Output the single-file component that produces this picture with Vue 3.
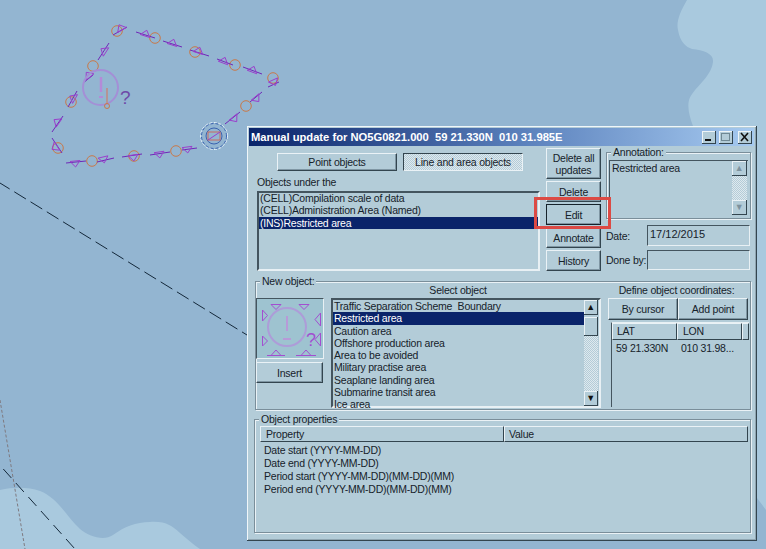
<script setup>
const titleText = 'Manual update for NO5G0821.000  59 21.330N  010 31.985E'
const segments = [
  [109, 43, 98, 60, 106, 52], [93, 75, 83, 83, 90, 77], [77, 91, 68, 107, 75, 99],
  [63, 116, 52, 132, 59, 123], [52, 138, 62, 153, 57, 146], [66, 163, 86, 161, 75, 161],
  [97, 162, 114, 158, 103, 157], [122, 157, 142, 154, 133, 155], [150, 155, 170, 152, 159, 152],
  [182, 150, 197, 148, 187, 147], [225, 124, 240, 112, 233, 117], [250, 102, 262, 92, 255, 97],
  [268, 87, 279, 82, 273, 80], [262, 74, 243, 67, 252, 72], [233, 65, 217, 59, 223, 63],
  [209, 56, 190, 50, 198, 53], [182, 47, 163, 41, 172, 45], [155, 38, 136, 32, 145, 36],
  [127, 27, 113, 35, 122, 30]
]
const trianglePoints = (s) => {
  const [x1, y1, x2, y2, cx, cy] = s
  const dx = x2 - x1
  const dy = y2 - y1
  const len = Math.hypot(dx, dy)
  const ux = dx / len
  const uy = dy / len
  return `${cx - ux * 5},${cy - uy * 5} ${cx + ux * 5},${cy + uy * 5} ${cx - uy * 6},${cy + ux * 6}`
}
const circles = [
  [117, 31], [155, 38], [195, 52], [235, 65], [273, 78], [246, 106], [176, 151],
  [134, 156], [92, 161], [58, 148], [71, 102], [93, 66]
]
const dashLines = [
  { d: 'M-2 181.8 L247 335', dash: '13.7 5.4' },
  { d: 'M3.3 469 L75 549', dash: '12 6.8' }
]
const existing = ['(CELL)Compilation scale of data', '(CELL)Administration Area (Named)', '(INS)Restricted area']
const objects = [
  'Traffic Separation Scheme  Boundary', 'Restricted area', 'Caution area', 'Offshore production area',
  'Area to be avoided', 'Military practise area', 'Seaplane landing area', 'Submarine transit area', 'Ice area'
]
const properties = [
  'Date start (YYYY-MM-DD)', 'Date end (YYYY-MM-DD)',
  'Period start (YYYY-MM-DD)(MM-DD)(MM)', 'Period end (YYYY-MM-DD)(MM-DD)(MM)'
]
</script>

<template>
  <div class="desktop">
    <svg class="chart" width="766" height="549" viewBox="0 0 766 549">
      <path d="M687 0 C680 12 676 22 678 30 C680 42 686 47 692 49 C704 50 714 54 713 62 C711 78 693 88 689 100 C687 108 690 118 693 126 L757 126 L757 498 L766 510 L766 0 Z" fill="#a9c9de" />
      <path d="M0 490 C14 487 28 487 40 491 C58 498 66 516 80 529 C90 537 104 541 113 535 C124 527 136 522 150 522 C166 521 172 526 180 533 C187 539 194 545 200 549 L0 549 Z" fill="#a9c9de" />
      <path v-for="l in dashLines" :key="l.d" :d="l.d" fill="none" stroke="#14283a" :stroke-dasharray="l.dash" />
      <path d="M0 400 L25 549" fill="none" stroke="#7f7a80" stroke-dasharray="3 2" />

      <g fill="none">
        <circle v-for="c in circles" :key="c[0]" :cx="c[0]" :cy="c[1]" r="5.3" stroke="#c8794a" />
        <g v-for="s in segments" :key="s[0] + '-' + s[1]">
          <line :x1="s[0]" :y1="s[1]" :x2="s[2]" :y2="s[3]" stroke="#6f28b8" />
          <polygon :points="trianglePoints(s)" stroke="#9a3fcc" />
        </g>
        <circle cx="100.5" cy="87.5" r="17.5" stroke="#a48fd6" stroke-width="2" />
        <line x1="101" y1="77" x2="101" y2="92" stroke="#b48ad8" stroke-width="2.5" />
        <line x1="99" y1="97" x2="103" y2="97" stroke="#b48ad8" stroke-width="2" />
        <line x1="107" y1="88" x2="107" y2="104" stroke="#c08a80" stroke-width="1.5" />
        <circle cx="107" cy="106" r="2.5" stroke="#c8794a" />
        <circle cx="214" cy="136" r="13.5" stroke="#e8f2fa" stroke-dasharray="3 1.5" />
        <circle cx="214" cy="136" r="12.5" stroke="#3a62b0" stroke-dasharray="3 2" />
        <circle cx="214" cy="136" r="8" stroke="#3a62b0" />
        <rect x="208" y="132" width="12" height="8" stroke="#c86a60" />
        <line x1="208" y1="140" x2="220" y2="132" stroke="#9a3fcc" />
      </g>
      <text class="mark" x="120" y="104">?</text>
    </svg>

    <div class="window">
      <div class="title">
        <span class="title-text">{{ titleText }}</span>
        <span class="title-buttons">
          <span class="tb"><svg width="11" height="10"><rect x="2" y="7" width="6" height="2" fill="#111" /></svg></span>
          <span class="tb"><svg width="11" height="10"><rect x="1.5" y="1.5" width="8" height="7" fill="none" stroke="#6f8894" /></svg></span>
          <span class="tb tb-close"><svg width="11" height="10"><path d="M2 1 L9 9 M9 1 L2 9" stroke="#111" stroke-width="1.6" /></svg></span>
        </span>
      </div>

      <div class="top">
        <div class="objects">
          <div class="tabs">
            <button class="btn tab">Point objects</button>
            <button class="btn tab pressed">Line and area objects</button>
          </div>
          <div class="under-label">Objects under the</div>
          <div class="list under-list">
            <div v-for="(row, i) in existing" :key="row" class="row" :class="{ sel: i === 2 }">{{ row }}</div>
          </div>
        </div>

        <div class="actions">
          <button class="btn act tall">Delete all<br>updates</button>
          <button class="btn act">Delete</button>
          <button class="btn act focused">Edit</button>
          <button class="btn act">Annotate</button>
          <button class="btn act">History</button>
        </div>

        <div class="meta">
          <div class="group annotation">
            <span class="legend">Annotation:</span>
            <div class="note">
              <span class="note-text">Restricted area</span>
              <div class="scroll note-scroll">
                <span class="arrow muted">▲</span>
                <span class="track"></span>
                <span class="arrow muted">▼</span>
              </div>
            </div>
          </div>
          <div class="field date-field">
            <label>Date:</label>
            <span class="input">17/12/2015</span>
          </div>
          <div class="field done-field">
            <label>Done by:</label>
            <span class="input"></span>
          </div>
        </div>
      </div>

      <div class="group new-object">
        <span class="legend">New object:</span>
        <div class="preview-col">
          <div class="preview">
            <svg width="66" height="59" viewBox="0 0 66 59" fill="none" stroke="#a24fd0">
              <circle cx="30" cy="28" r="19" stroke="#ad9cd8" stroke-width="2" />
              <line x1="30" y1="17" x2="30" y2="32" stroke="#b79ad8" stroke-width="2" />
              <line x1="26" y1="40" x2="34" y2="40" stroke="#b79ad8" stroke-width="2" />
              <path d="M14 5.5 H24 L19 10.5 Z M42 5.5 H52 L47 10.5 Z M5.5 11 V22 L10.5 16.5 Z M5.5 37 V47 L10.5 42 Z M63.5 14 V27 L58 20.5 Z M63.5 34 V47 L58 40.5 Z M10 56.5 H28 M19 51 L24 56.5 H14 Z M39 56.5 H59 M49 51 L54 56.5 H44 Z" />
              <text class="mark preview-mark" x="49" y="47">?</text>
            </svg>
          </div>
          <button class="btn insert">Insert</button>
        </div>

        <div class="select-col">
          <div class="caption select-caption">Select object</div>
          <div class="list object-list">
            <div class="rows">
              <div v-for="(row, i) in objects" :key="row" class="row" :class="{ sel: i === 1 }">{{ row }}</div>
            </div>
            <div class="scroll list-scroll">
              <span class="arrow">▲</span>
              <span class="thumb"></span>
              <span class="track"></span>
              <span class="arrow">▼</span>
            </div>
          </div>
        </div>

        <div class="coords-col">
          <div class="caption coords-caption">Define object coordinates:</div>
          <div class="coord-buttons">
            <button class="btn coord">By cursor</button>
            <button class="btn coord">Add point</button>
          </div>
          <div class="coord-table">
            <div class="coord-head">
              <span class="head-cell lat">LAT</span>
              <span class="head-cell lon">LON</span>
              <span class="head-cell"></span>
            </div>
            <div class="coord-row">
              <span class="lat">59 21.330N</span>
              <span class="lon">010 31.98...</span>
            </div>
          </div>
        </div>
      </div>

      <div class="group props">
        <span class="legend">Object properties</span>
        <div class="props-head">
          <span class="head-cell prop-name">Property</span>
          <span class="head-cell prop-value">Value</span>
        </div>
        <div v-for="p in properties" :key="p" class="prop-row">{{ p }}</div>
      </div>

      <div class="highlight"></div>
    </div>
  </div>
</template>

<style scoped>
.desktop {
  position: relative;
  width: 766px;
  height: 549px;
  overflow: hidden;
  background: #93b5d1;
  font-family: "Liberation Sans", Arial, sans-serif;
  font-size: 10.5px;
  letter-spacing: -0.22px;
  color: #16222a;
}

.chart {
  position: absolute;
  left: 0;
  top: 0;
}

.mark {
  font-family: "Liberation Sans", Arial, sans-serif;
  font-size: 19px;
  fill: #6e4aa8;
  stroke: none;
}

.preview-mark {
  font-size: 18px;
  fill: #a24fd0;
}

.window {
  position: absolute;
  left: 247px;
  top: 126px;
  width: 510px;
  height: 415px;
  box-sizing: border-box;
  padding: 2px;
  background: #b3ccd8;
  border-right: 1px solid #33454f;
  border-bottom: 1px solid #33454f;
  box-shadow: inset 1px 1px 0 #f0f6f9, inset -1px -1px 0 #8fa5b1;
}

.title {
  display: flex;
  align-items: center;
  justify-content: space-between;
  height: 18px;
  padding: 0 2px;
  background: linear-gradient(90deg, #0a246a, #5c82bd 55%, #a6caf0);
}

.title-text {
  color: #fff;
  font-weight: bold;
  font-size: 11.2px;
  letter-spacing: 0;
  white-space: pre;
}

.title-buttons {
  display: flex;
  gap: 3px;
}

.tb {
  display: flex;
  align-items: center;
  justify-content: center;
  width: 13px;
  height: 12px;
  background: #b3ccd8;
  border-right: 1px solid #33454f;
  border-bottom: 1px solid #33454f;
  box-shadow: inset 1px 1px 0 #eef4f7;
}

.tb-close {
  margin-left: 2px;
}

.btn {
  box-sizing: border-box;
  padding: 0;
  font: inherit;
  letter-spacing: inherit;
  color: inherit;
  background: #b3ccd8;
  border: 1px solid;
  border-color: #eaf2f6 #33454f #33454f #eaf2f6;
  box-shadow: inset -1px -1px 0 #7f96a3;
}

.top {
  display: flex;
  margin: 2px 0 0 8px;
  height: 125px;
}

.objects {
  width: 283px;
}

.tabs {
  display: flex;
  gap: 6px;
  margin: 5px 0 0 20px;
}

.tab {
  width: 120px;
  height: 18px;
}

.pressed {
  border-color: #33454f #eaf2f6 #eaf2f6 #33454f;
  box-shadow: none;
  background: repeating-conic-gradient(#dfe9ee 0 25%, #b3ccd8 0 50%) 0 0 / 2px 2px;
}

.under-label {
  margin-top: 4px;
  height: 16px;
  line-height: 14px;
}

.list {
  box-sizing: border-box;
  border: 2px solid;
  border-color: #44555f #e8f0f4 #e8f0f4 #44555f;
}

.under-list {
  height: 80px;
}

.under-list .row:first-child {
  margin-top: -1px;
}

.row {
  height: 12.4px;
  line-height: 12.4px;
  padding-left: 1px;
  white-space: pre;
}

.sel {
  background: #0a246a;
  color: #fff;
}

.actions {
  display: flex;
  flex-direction: column;
  gap: 2px;
  width: 55px;
  margin-left: 6px;
}

.act {
  height: 21px;
  line-height: 12px;
}

.tall {
  height: 31px;
}

.focused {
  outline: 1px solid #16222a;
  outline-offset: -1px;
}

.meta {
  width: 145px;
  margin-left: 5px;
}

.group {
  position: relative;
  box-sizing: border-box;
  border: 1px solid #7a8e9a;
  box-shadow: 1px 1px 0 #eaf2f6, inset 1px 1px 0 #eaf2f6;
}

.legend {
  position: absolute;
  left: 4px;
  top: -7px;
  padding: 0 2px;
  line-height: 12px;
  background: #b3ccd8;
}

.annotation {
  box-sizing: border-box;
  height: 67px;
  margin-top: 4px;
  padding: 7px 2px 2px;
}

.note {
  display: flex;
  justify-content: space-between;
  height: 55px;
  box-sizing: border-box;
  border-left: 1px solid #44555f;
  border-top: 1px solid #44555f;
}

.note-text {
  padding: 1px 0 0 2px;
}

.scroll {
  display: flex;
  flex-direction: column;
}

.note-scroll {
  width: 15px;
  margin-right: 1px;
}

.arrow {
  display: flex;
  align-items: center;
  justify-content: center;
  flex: none;
  height: 14px;
  font-size: 9px;
  color: #111;
  background: #b3ccd8;
  border-right: 1px solid #33454f;
  border-bottom: 1px solid #33454f;
  box-shadow: inset 1px 1px 0 #eaf2f6;
}

.muted {
  color: #7d929e;
}

.track {
  flex: 1;
  background: repeating-conic-gradient(#dfe9ee 0 25%, #b3ccd8 0 50%) 0 0 / 2px 2px;
}

.field {
  display: flex;
  align-items: center;
  justify-content: space-between;
}

.field label {
  white-space: nowrap;
}

.date-field {
  margin-top: 6px;
}

.done-field {
  margin-top: 4px;
}

.input {
  box-sizing: border-box;
  flex: none;
  width: 103px;
  height: 20px;
  margin-right: 1px;
  padding: 1px 0 0 2px;
  border: 1px solid;
  border-color: #44555f #e8f0f4 #e8f0f4 #44555f;
  font-size: 11px;
  letter-spacing: 0;
  line-height: 14px;
}

.date-field .input {
  height: 21px;
}

.new-object {
  display: flex;
  width: 496px;
  height: 129px;
  margin: 8px 0 0 6px;
  padding: 2px 0 0 0;
}

.preview-col {
  width: 68px;
  margin: 14px 0 0 0;
}

.preview {
  box-sizing: border-box;
  height: 61px;
  background: #9ec3d0;
  border: 1px solid;
  border-color: #44555f #e8f0f4 #e8f0f4 #44555f;
}

.preview svg {
  display: block;
}

.insert {
  width: 67px;
  height: 21px;
  margin-top: 3px;
}

.select-col {
  width: 270px;
  margin-left: 7px;
}

.caption {
  height: 12px;
  line-height: 12px;
  text-align: center;
  margin-bottom: 2px;
}

.select-caption {
  padding-right: 16px;
}

.coords-caption {
  padding-right: 4px;
}

.object-list {
  display: flex;
  height: 110px;
}

.rows {
  flex: 1;
}

.object-list .row {
  height: 12.25px;
  line-height: 12.25px;
}

.list-scroll {
  width: 14px;
  margin-right: 1px;
}

.thumb {
  flex: none;
  height: 18px;
  margin-top: 2px;
  background: #b3ccd8;
  border-right: 1px solid #33454f;
  border-bottom: 1px solid #33454f;
  box-shadow: inset 1px 1px 0 #eaf2f6;
}

.coords-col {
  width: 141px;
  margin-left: 7px;
}

.coord-buttons {
  display: flex;
  margin-top: 1px;
}

.coord {
  width: 70px;
  height: 22px;
}

.coord-table {
  box-sizing: border-box;
  height: 85px;
  margin: 2px 0 0 3px;
  border-left: 1px solid #44555f;
  border-top: 1px solid #e8f0f4;
}

.coord-head {
  display: flex;
  height: 17px;
}

.head-cell {
  box-sizing: border-box;
  padding-left: 5px;
  line-height: 15px;
  border: 1px solid;
  border-color: #eaf2f6 #33454f #33454f #eaf2f6;
}

.lat {
  width: 65px;
}

.lon {
  width: 65px;
}

.coord-head .lat {
  padding-left: 4px;
}

.coord-head .head-cell:last-child {
  flex: 1;
  padding: 0;
}

.coord-row {
  display: flex;
  margin-top: 2px;
  line-height: 13px;
  white-space: nowrap;
}

.coord-row span {
  padding-left: 4px;
  box-sizing: border-box;
}

.props {
  width: 497px;
  height: 114px;
  margin: 9px 0 0 5px;
  padding: 6px 2px 0 5px;
}

.props-head {
  display: flex;
  height: 16px;
}

.prop-name {
  width: 244px;
}

.prop-value {
  flex: 1;
  padding-left: 4px;
}

.props-head + .prop-row {
  margin-top: 2px;
}

.prop-row {
  height: 13px;
  line-height: 13px;
  padding-left: 4px;
}

.highlight {
  position: absolute;
  left: 287px;
  top: 71px;
  width: 77px;
  height: 32px;
  box-sizing: border-box;
  border: 3px solid #dc4a44;
  pointer-events: none;
}
</style>
